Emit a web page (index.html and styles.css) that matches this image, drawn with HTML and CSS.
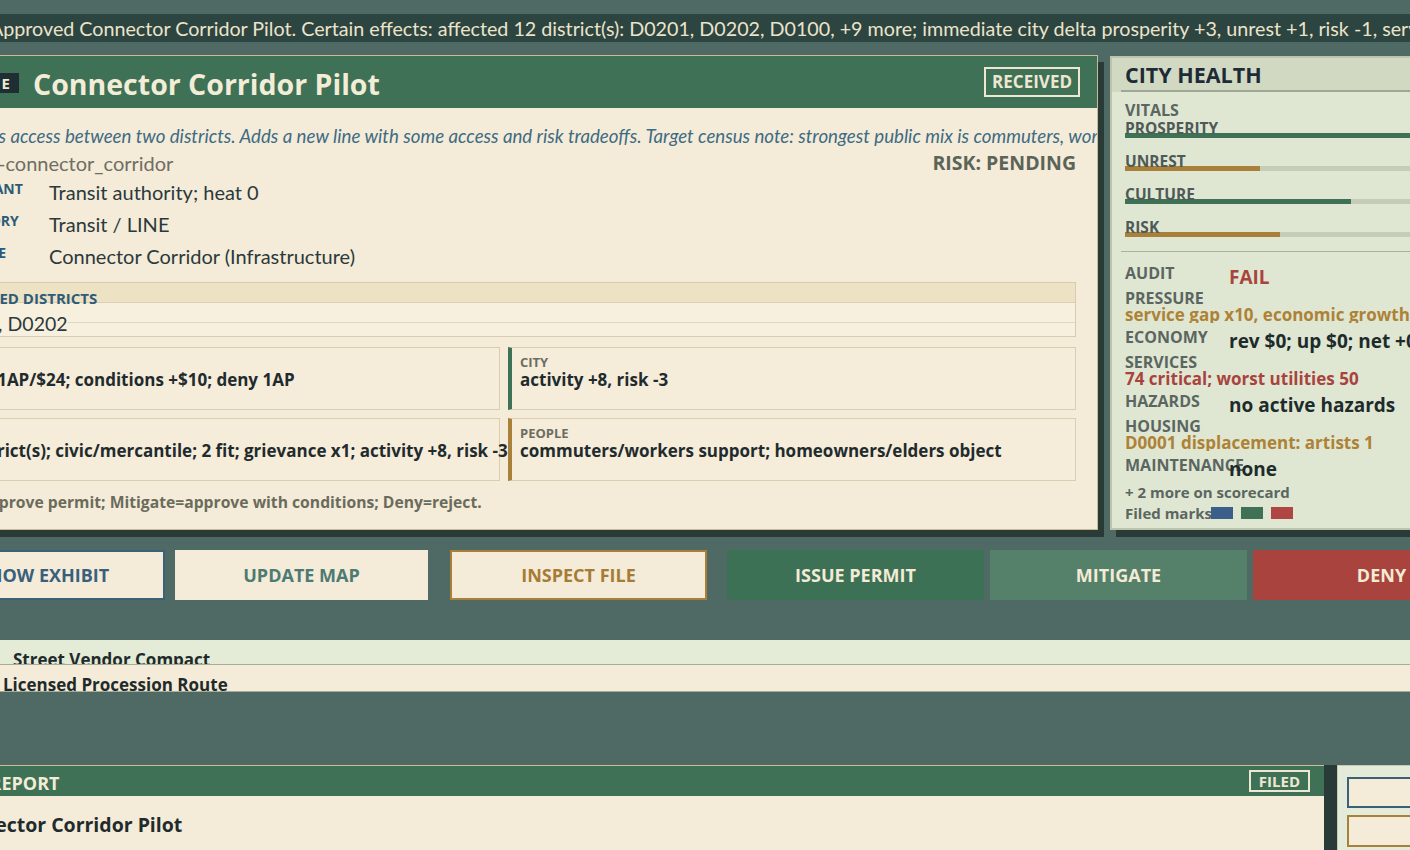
FILE: index.html
```html
<!DOCTYPE html>
<html lang="en">
<head>
<meta charset="utf-8">
<title>Permit Desk</title>
<link rel="stylesheet" href="styles.css">
</head>
<body>
<div class="app">
  <div class="ticker">Approved Connector Corridor Pilot. Certain effects: affected 12 district(s): D0201, D0202, D0100, +9 more; immediate city delta prosperity +3, unrest +1, risk -1, services +2; next review in 3 turns.</div>

  <div class="main">
    <section class="case">
      <header class="case-head">
        <span class="case-tag">FILE</span>
        <h1 class="case-title">Connector Corridor Pilot</h1>
        <span class="stamp">RECEIVED</span>
      </header>
      <div class="case-body">
        <p class="desc">Improves access between two districts. Adds a new line with some access and risk tradeoffs. Target census note: strongest public mix is commuters, workers and students.</p>
        <div class="idline"><span class="permit-id">transit-connector_corridor</span><span class="risk">RISK: PENDING</span></div>
        <dl class="facts">
          <div class="fact"><dt>APPLICANT</dt><dd>Transit authority; heat 0</dd></div>
          <div class="fact"><dt>CATEGORY</dt><dd>Transit / LINE</dd></div>
          <div class="fact"><dt>MODULE</dt><dd>Connector Corridor (Infrastructure)</dd></div>
        </dl>
        <div class="districts">
          <div class="districts-head">AFFECTED DISTRICTS</div>
          <div class="districts-body"><span>D0201, D0202</span></div>
        </div>
        <div class="effects">
          <div class="effect"><div class="effect-label">COST</div><div class="effect-value indent-cost">Issue 1AP/$24; conditions +$10; deny 1AP</div></div>
          <div class="effect effect-side side-city"><div class="effect-label">CITY</div><div class="effect-value">activity +8, risk -3</div></div>
          <div class="effect"><div class="effect-label">SCOPE</div><div class="effect-value indent-scope">2 district(s); civic/mercantile; 2 fit; grievance x1; activity +8, risk -3</div></div>
          <div class="effect effect-side side-people"><div class="effect-label">PEOPLE</div><div class="effect-value">commuters/workers support; homeowners/elders object</div></div>
        </div>
        <p class="note">Issue=approve permit; Mitigate=approve with conditions; Deny=reject.</p>
      </div>
    </section>

    <aside class="health">
      <div class="hp-head"><h2 class="hp-title">CITY HEALTH</h2></div>
      <div class="hp-body">
        <div class="hp-section">VITALS</div>
        <div class="metrics">
          <div class="metric"><div class="metric-label">PROSPERITY</div><div class="bar"><div class="fill fill-green" style="width:100%"></div></div></div>
          <div class="metric"><div class="metric-label">UNREST</div><div class="bar"><div class="fill fill-ochre" style="width:41%"></div></div></div>
          <div class="metric"><div class="metric-label">CULTURE</div><div class="bar"><div class="fill fill-green" style="width:68.5%"></div></div></div>
          <div class="metric"><div class="metric-label">RISK</div><div class="bar"><div class="fill fill-ochre" style="width:47%"></div></div></div>
        </div>
        <div class="hp-sep"></div>
        <div class="hp-rows">
          <div class="kv"><div class="kv-label">AUDIT</div><div class="kv-value v-red">FAIL</div></div>
          <div class="kv kv-stack"><div class="kv-label">PRESSURE</div><div class="kv-value v-ochre">service gap x10, economic growth x2</div></div>
          <div class="kv"><div class="kv-label">ECONOMY</div><div class="kv-value">rev $0; up $0; net +0</div></div>
          <div class="kv kv-stack"><div class="kv-label">SERVICES</div><div class="kv-value v-red">74 critical; worst utilities 50</div></div>
          <div class="kv"><div class="kv-label">HAZARDS</div><div class="kv-value">no active hazards</div></div>
          <div class="kv kv-stack"><div class="kv-label">HOUSING</div><div class="kv-value v-ochre">D0001 displacement: artists 1</div></div>
          <div class="kv"><div class="kv-label">MAINTENANCE</div><div class="kv-value">none</div></div>
          <div class="hp-more">+ 2 more on scorecard</div>
          <div class="hp-marks"><span class="marks-label">Filed marks</span><span class="swatch sw-blue"></span><span class="swatch sw-green"></span><span class="swatch sw-red"></span></div>
        </div>
      </div>
    </aside>
  </div>

  <div class="actions">
    <div class="group">
      <button class="btn btn-exhibit">SHOW EXHIBIT</button>
      <button class="btn btn-map">UPDATE MAP</button>
      <button class="btn btn-inspect">INSPECT FILE</button>
    </div>
    <div class="group group-decide">
      <button class="btn btn-issue">ISSUE PERMIT</button>
      <button class="btn btn-mitigate">MITIGATE</button>
      <button class="btn btn-deny">DENY</button>
    </div>
  </div>

  <div class="queue">
    <div class="queue-row queue-row-alt">Street Vendor Compact</div>
    <div class="queue-row">Licensed Procession Route</div>
  </div>

  <div class="bottom">
    <section class="report">
      <header class="report-head"><span class="report-title">CASE REPORT</span><span class="stamp stamp-small">FILED</span></header>
      <div class="report-body">Connector Corridor Pilot</div>
    </section>
    <aside class="side">
      <div class="side-box side-blue">SHOW EXHIBIT</div>
      <div class="side-box side-ochre">INSPECT FILE</div>
    </aside>
  </div>
</div>
</body>
</html>
```

FILE: styles.css
```css
* { box-sizing: border-box; }
html, body { margin: 0; height: 100%; overflow: hidden; }
body {
  background: #4f6a64;
  font-family: Lato, "Open Sans", sans-serif;
  color: #22302f;
}
.app { margin-left: -77px; width: 1800px; padding-top: 14px; }

.ticker {
  height: 28px; line-height: 30px;
  background: #2c4541; color: #ece3cb;
  font-size: 19.7px; padding-left: 67px;
  white-space: nowrap; overflow: hidden;
}

.main {
  display: grid;
  grid-template-columns: 1175px 360px;
  column-gap: 12px;
  margin-top: 13px;
  align-items: stretch;
}

/* case card */
.case {
  background: #f4ebd9;
  border: 1px solid #c9bb95;
  box-shadow: 6px 7px 0 #2a3a36;
  overflow: hidden;
}
.case-head {
  height: 52px; background: #3e7156;
  display: flex; align-items: center;
  padding: 0 17px 0 18px;
}
.case-tag {
  width: 77px; height: 20px; line-height: 20px; flex: none;
  background: #1f2e33; color: #efe7d2;
  font-family: "Open Sans", sans-serif; font-size: 15px; font-weight: 700;
  letter-spacing: 3px;
  text-align: right; padding-right: 6px;
  white-space: nowrap; overflow: hidden;
  margin-top: 2px;
}
.case-title {
  margin: 0 0 0 14px; padding-top: 3px;
  font-family: "Open Sans", sans-serif; font-size: 28.5px; font-weight: 700; line-height: 36px;
  color: #f3ecd6; white-space: nowrap;
}
.stamp {
  margin-left: auto;
  border: 2px solid #efe7d2; color: #efe7d2;
  height: 30px; line-height: 26px; padding: 0 6px;
  font-family: "Open Sans", sans-serif; font-size: 17px; font-weight: 700;
}
.case-body { padding: 14px 21px 17px 21px; }
.desc {
  margin: 0; font-style: italic; font-size: 18.7px; line-height: 28px; text-indent: -9px;
  color: #3e6b83; white-space: nowrap;
}
.idline { display: flex; justify-content: space-between; line-height: 26px; font-size: 20px; }
.permit-id { color: #6f6e62; margin-left: -3px; }
.risk { font-family: "Open Sans", sans-serif; font-size: 19.5px; font-weight: 700; color: #5b6457; }
.facts { margin: 0; }
.fact { display: grid; grid-template-columns: 104px 1fr; height: 32px; }
.fact dt {
  font-family: "Open Sans", sans-serif; font-size: 14px; font-weight: 700; line-height: 20px; padding-top: 3px;
  color: #2e5a77; white-space: nowrap;
}
.fact dd { margin: 0; font-size: 20px; line-height: 32px; color: #2b393b; }

.districts { margin-top: 10px; border: 1px solid #d7cbb0; background: #f8f0de; }
.districts-head {
  height: 20px; border-bottom: 1px solid #dccfb2; background: #eee2c4;
  padding: 5px 0 0 0; line-height: 20px;
  font-family: "Open Sans", sans-serif; font-size: 15px; font-weight: 700;
  color: #2f5b79; white-space: nowrap;
}
.districts-body {
  height: 33px; padding-top: 8px; line-height: 25px; font-size: 19.5px; color: #2b393b;
  text-indent: -8px; white-space: nowrap;
  background: linear-gradient(#f8f0de 0 19px, #e3d8bf 19px 20px, #f8f0de 20px);
}
.districts-body span { background: #f8f0de; }

.effects {
  margin-top: 10px;
  display: grid; grid-template-columns: 555px 1fr; gap: 8px;
}
.effect {
  height: 63px; border: 1px solid #d9cdb2; background: #f5ecda;
  padding: 7px 8px 0 9px; white-space: nowrap;
}
.effect-side { position: relative; padding-left: 8px; border-left-width: 4px; }
.side-city { border-left-color: #3e7156; }
.side-people { border-left-color: #a8803a; }
.effect-label {
  font-family: "Open Sans", sans-serif; font-size: 13px; font-weight: 700; line-height: 14px; color: #6c6c60;
}
.effect-value {
  font-family: "Open Sans", sans-serif; font-size: 17px; font-weight: 700; line-height: 22px; color: #1f2b2d;
}
.indent-cost { text-indent: -6px; }
.indent-scope { text-indent: -4px; }
.note {
  margin: 11px 0 0; line-height: 20px; text-indent: -15px;
  font-family: "Open Sans", sans-serif; font-size: 15.7px; font-weight: 700;
  color: #6b6b5c; white-space: nowrap;
}

/* city health */
.health {
  margin-top: 1px;
  border: 2px solid #bcc4ae; background: #dfe7d3;
  box-shadow: 6px 7px 0 #2a3a36; overflow: hidden;
}
.hp-head { background: #d1d9c3; padding: 1px 0 0 9px; }
.hp-title {
  margin: 0; padding-left: 4px;
  font-family: "Open Sans", sans-serif; font-size: 21.5px; font-weight: 700; line-height: 31px;
  color: #1d2b37; border-bottom: 2px solid #9ea793;
}
.hp-body { padding: 9px 13px 0 13px; }
.hp-section {
  font-family: "Open Sans", sans-serif; font-size: 16px; font-weight: 700; line-height: 19px; color: #5b6661;
}
.metrics { padding-top: 4px; display: flex; flex-direction: column; gap: 19px; }
.metric-label {
  height: 9px; line-height: 9px;
  font-family: "Open Sans", sans-serif; font-size: 15.5px; font-weight: 700; color: #4f5a57; white-space: nowrap;
}
.bar { height: 5px; background: #c5cdb8; }
.fill { height: 100%; }
.fill-green { background: #3e7156; }
.fill-ochre { background: #a8803a; }
.hp-sep { margin: 14px 0 0 -4px; height: 1px; background: #a9b19d; }
.hp-rows { margin-top: 12px; }
.kv { display: grid; grid-template-columns: 104px 1fr; height: 26px; }
.kv-label {
  font-family: "Open Sans", sans-serif; font-size: 16px; font-weight: 700; line-height: 18px;
  color: #5b6661; white-space: nowrap;
}
.kv-value {
  margin-top: 5px; line-height: 16px;
  font-family: "Open Sans", sans-serif; font-size: 19px; font-weight: 700;
  color: #1e2b2b; white-space: nowrap; overflow: hidden;
}
.kv-stack { display: block; height: 38px; }
.kv-stack .kv-label { line-height: 17px; }
.kv-stack .kv-value { margin-top: 0; font-size: 17px; }
.v-red { color: #a8443d; }
.v-ochre { color: #ad8236; }
.hp-more {
  height: 22px; padding-top: 1px; line-height: 18px;
  font-family: "Open Sans", sans-serif; font-size: 15px; font-weight: 700; color: #5b6661;
}
.hp-marks { display: flex; align-items: center; height: 18px; }
.marks-label {
  width: 86px; flex: none; line-height: 18px;
  font-family: "Open Sans", sans-serif; font-size: 15px; font-weight: 700; color: #5b6661; white-space: nowrap;
}
.swatch { width: 22px; height: 12px; flex: none; margin-right: 8px; }
.sw-blue { background: #3c5f8a; }
.sw-green { background: #3e7156; }
.sw-red { background: #b04643; }

/* actions */
.actions { display: flex; gap: 20px; margin-top: 20px; }
.group { display: flex; gap: 10px; }
.group-decide { gap: 6px; }
.btn {
  height: 50px; width: 257px; padding: 0;
  border: 2px solid transparent; background: #f4ebd9;
  font-family: "Open Sans", sans-serif; font-size: 18px; font-weight: 700;
  line-height: 46px; text-align: center;
}
.btn-exhibit { width: 242px; border-color: #3d6079; color: #3a5f7c; }
.btn-map { width: 253px; border-color: #f4ebd9; color: #4d7a73; }
.btn-inspect { margin-left: 12px; border-color: #a8803a; color: #a67c35; }
.btn-issue { background: #3c7155; border-color: #3c7155; color: #f3ebd6; }
.btn-mitigate { background: #55806a; border-color: #55806a; color: #f3ebd6; }
.btn-deny { background: #a8443d; border-color: #a8443d; color: #f3ebd6; }

/* queue */
.queue { margin-top: 40px; }
.queue-row {
  height: 27px; overflow: hidden;
  padding: 10px 0 0 80px;
  background: #f4ebd9; border-bottom: 1px solid #a8ad98;
  font-family: "Open Sans", sans-serif; font-size: 17px; font-weight: 700; line-height: 20px;
  color: #1f2b2b; white-space: nowrap;
}
.queue-row-alt { height: 25px; padding-left: 90px; background: #e4ebd7; }

/* bottom */
.bottom { display: flex; margin-top: 73px; }
.report {
  width: 1401px; flex: none; height: 200px;
  border-top: 1px solid #cbbd96; background: #f4ebd9;
  box-shadow: 13px 0 0 #2a3a36;
}
.report-head {
  height: 30px; background: #3e7156;
  display: flex; align-items: center; padding: 0 14px 0 18px;
}
.report-title {
  font-family: "Open Sans", sans-serif; font-size: 18px; font-weight: 700; color: #f3ecd6; padding-top: 4px;
}
.stamp-small { height: 22px; line-height: 18px; font-size: 15px; padding: 0 8px; }
.report-body {
  padding: 16px 22px; line-height: 26px;
  font-family: "Open Sans", sans-serif; font-size: 19.5px; font-weight: 700;
  color: #1f2b2d; white-space: nowrap;
}
.side {
  margin-left: 13px; width: 300px; flex: none; height: 200px;
  background: #e4ebd8; border: 1px solid #c3cbb5;
  padding: 11px 0 0 9px;
}
.side-box {
  width: 250px; height: 31px; border: 2px solid; margin-bottom: 7px;
  background: #f4ebd9; text-align: center; line-height: 27px;
  font-family: "Open Sans", sans-serif; font-size: 16px; font-weight: 700;
}
.side-blue { border-color: #3d6079; color: #3a5f7c; }
.side-ochre { height: 32px; border-color: #a8803a; color: #a67c35; }
```
